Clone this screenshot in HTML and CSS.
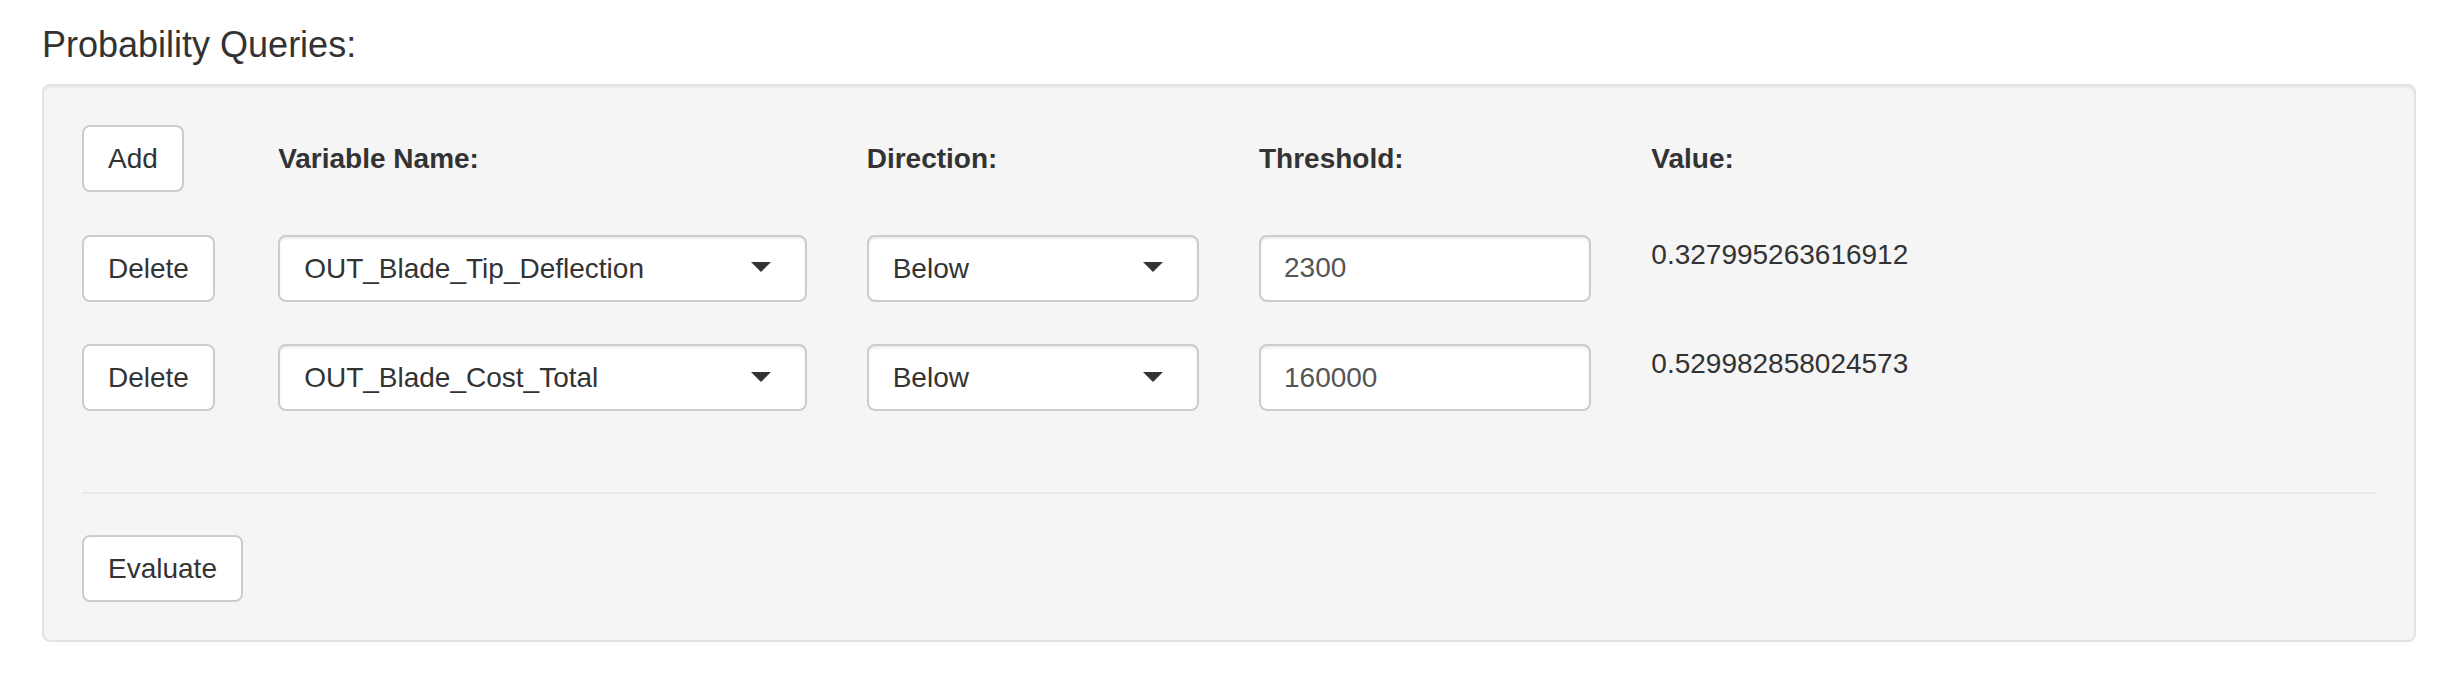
FILE: index.html
```html
<!DOCTYPE html>
<html lang="en">
<head>
<meta charset="utf-8">
<title>Probability Queries</title>
<link rel="stylesheet" href="styles.css">
</head>
<body>
<div class="page">
  <h4 class="title">Probability Queries:</h4>
  <div class="well">
    <div class="rows">
      <div class="qrow header">
        <div class="cell"><button class="btn" type="button">Add</button></div>
        <div class="cell"><span class="col-label">Variable Name:</span></div>
        <div class="cell"><span class="col-label">Direction:</span></div>
        <div class="cell"><span class="col-label">Threshold:</span></div>
        <div class="cell"><span class="col-label">Value:</span></div>
      </div>
      <div class="qrow">
        <div class="cell"><button class="btn" type="button">Delete</button></div>
        <div class="cell"><div class="select">OUT_Blade_Tip_Deflection</div></div>
        <div class="cell"><div class="select">Below</div></div>
        <div class="cell"><input class="input" type="text" value="2300"></div>
        <div class="cell"><div class="value">0.327995263616912</div></div>
      </div>
      <div class="qrow">
        <div class="cell"><button class="btn" type="button">Delete</button></div>
        <div class="cell"><div class="select">OUT_Blade_Cost_Total</div></div>
        <div class="cell"><div class="select">Below</div></div>
        <div class="cell"><input class="input" type="text" value="160000"></div>
        <div class="cell"><div class="value">0.529982858024573</div></div>
      </div>
    </div>
    <hr class="divider">
    <button class="btn" type="button">Evaluate</button>
  </div>
</div>
</body>
</html>
```

FILE: styles.css
```css
* {
  box-sizing: border-box;
}

html, body {
  margin: 0;
  padding: 0;
  background: #ffffff;
}

body {
  font-family: "Liberation Sans", Arial, Helvetica, sans-serif;
  font-size: 28px;
  line-height: 40px;
  color: #333333;
}

.page {
  padding: 25px 34px 0 42px;
}

.title {
  margin: 0 0 19px;
  font-size: 36px;
  line-height: 40px;
  font-weight: normal;
  color: #333333;
}

.well {
  background: #f5f5f5;
  border: 2px solid #e3e3e3;
  border-radius: 8px;
  box-shadow: inset 0 2px 2px rgba(0, 0, 0, 0.05);
  padding: 39px 38px 38px 38px;
}

.rows {
  display: flex;
  flex-direction: column;
  gap: 42.5px;
}

.qrow {
  display: grid;
  grid-template-columns: minmax(0, 1fr) minmax(0, 3fr) minmax(0, 2fr) minmax(0, 2fr) minmax(0, 4fr);
  margin: 0 -30px;
  align-items: start;
}

.qrow.header {
  align-items: center;
}

.cell {
  padding: 0 30px;
  min-width: 0;
}

.col-label {
  font-weight: bold;
  display: block;
  line-height: 40px;
}

.btn {
  display: inline-block;
  font-family: inherit;
  font-size: 28px;
  line-height: 39px;
  color: #333333;
  background: #ffffff;
  border: 2px solid #cccccc;
  border-radius: 8px;
  padding: 12px 24px;
  margin: 0;
  cursor: pointer;
  white-space: nowrap;
}

.select {
  position: relative;
  width: 100%;
  height: 67px;
  background: #ffffff;
  border: 2px solid #cccccc;
  border-radius: 8px;
  box-shadow: inset 0 2px 2px rgba(0, 0, 0, 0.075);
  padding: 0 70px 0 24px;
  line-height: 63px;
  color: #333333;
  white-space: nowrap;
  overflow: hidden;
}

.select::after {
  content: "";
  position: absolute;
  top: 50%;
  right: 34px;
  margin-top: -6px;
  width: 0;
  height: 0;
  border-style: solid;
  border-width: 10px 10px 0 10px;
  border-color: #333333 transparent transparent transparent;
}

.input {
  display: block;
  width: 100%;
  height: 67px;
  margin: 0;
  background: #ffffff;
  border: 2px solid #cccccc;
  border-radius: 8px;
  box-shadow: inset 0 2px 2px rgba(0, 0, 0, 0.075);
  padding: 0 23px;
  font-family: inherit;
  font-size: 28px;
  line-height: 63px;
  color: #555555;
  outline: none;
}

.value {
  line-height: 40px;
  color: #333333;
  white-space: nowrap;
}

.divider {
  margin: 81px 0 41px;
  height: 0;
  border: 0;
  border-top: 2px solid #e9e9e9;
}
```
